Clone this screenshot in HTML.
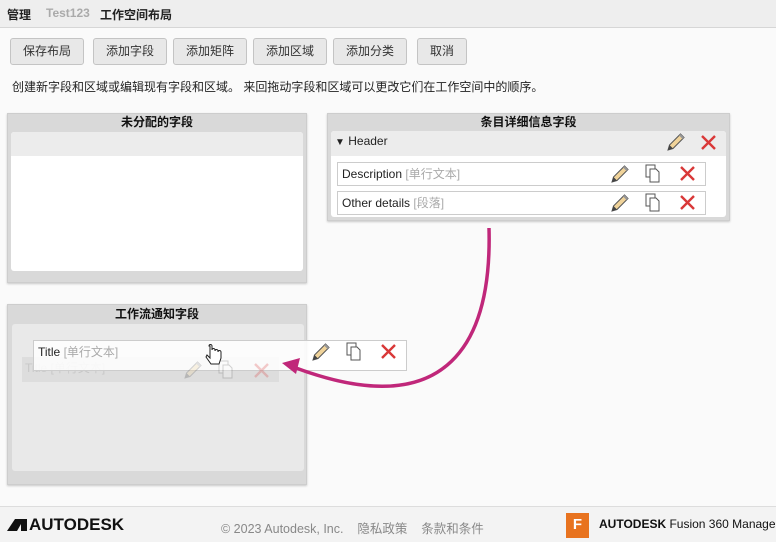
<!DOCTYPE html>
<html><head><meta charset="utf-8"><style>
*{margin:0;padding:0;box-sizing:border-box}
body{width:776px;height:542px;background:#fafafa;font-family:"Liberation Sans","Noto Sans CJK SC",sans-serif;font-size:12px;color:#222;position:relative;overflow:hidden}
.a{position:absolute}
.top{left:0;top:0;width:776px;height:28px;background:#eee;border-bottom:1px solid #d6d6d6}
.btn{top:38px;height:27px;background:#e8e8e8;border:1px solid #c4c4c4;border-radius:3px;font-size:12px;line-height:25px;text-align:center;color:#333}
.panel{background:#d9d9d9;border:1px solid #cdcdcd;box-shadow:0 1px 2px rgba(0,0,0,.2)}
.ptitle{left:0;right:0;top:0;height:18px;text-align:center;font-weight:bold;font-size:12px;line-height:16px;color:#111}
.field{height:24px;background:#fff;border:1px solid #ccc;font-size:12px;line-height:22px;padding-left:4px;color:#222}
.g{color:#aaa}
svg.ic{position:absolute}
</style></head><body>
<div class="a top"></div>
<div class="a" style="left:7px;top:6px;font-weight:bold;font-size:12px">管理</div>
<div class="a" style="left:46px;top:6px;font-weight:bold;color:#aaa">Test123</div>
<div class="a" style="left:100px;top:6px;font-weight:bold">工作空间布局</div>

<div class="a btn" style="left:10px;width:74px">保存布局</div>
<div class="a btn" style="left:93px;width:74px">添加字段</div>
<div class="a btn" style="left:173px;width:74px">添加矩阵</div>
<div class="a btn" style="left:253px;width:74px">添加区域</div>
<div class="a btn" style="left:333px;width:74px">添加分类</div>
<div class="a btn" style="left:417px;width:50px">取消</div>
<div class="a" style="left:12px;top:78px;font-size:12px;color:#222">创建新字段和区域或编辑现有字段和区域。 来回拖动字段和区域可以更改它们在工作空间中的顺序。</div>

<div class="a panel" style="left:7px;top:113px;width:300px;height:170px">
  <div class="a ptitle">未分配的字段</div>
  <div class="a" style="left:3px;top:18px;width:292px;height:139px;background:#fff;border-radius:3px;overflow:hidden"><div style="height:24px;background:#ececec"></div></div>
</div>

<div class="a panel" style="left:327px;top:113px;width:403px;height:108px">
  <div class="a ptitle">条目详细信息字段</div>
  <div class="a" style="left:3px;top:17px;width:395px;height:86px;background:#fff;border-radius:3px;overflow:hidden"><div style="height:25px;background:#ececec"></div></div>
  <div class="a" style="left:7px;top:20px;font-size:12px"><span style="font-size:10px">▼</span> Header</div>
</div>
<div class="a field" style="left:337px;top:162px;width:369px">Description <span class="g">[单行文本]</span></div>
<div class="a field" style="left:337px;top:191px;width:369px">Other details <span class="g">[段落]</span></div>

<div class="a panel" style="left:7px;top:304px;width:300px;height:181px">
  <div class="a ptitle" style="top:1px">工作流通知字段</div>
  <div class="a" style="left:4px;top:19px;width:292px;height:147px;background:#e9e9e9;border-radius:3px"></div>
</div>
<div class="a" style="left:22px;top:357px;width:257px;height:25px;background:#ddd;color:#c8c8c8;font-size:12px;line-height:22px;padding-left:3px">Title [单行文本]</div>
<div class="a field" style="left:33px;top:340px;width:374px;height:31px;background:rgba(255,255,255,.85);line-height:22px">Title <span class="g">[单行文本]</span></div>

<svg width="776" height="542" class="ic" style="left:0;top:0" viewBox="0 0 776 542">
<defs>
<g id="pen"><path d="M1 17 L2.5 12 L13.5 1 L17 4.5 L6 15.5 Z" fill="#f0d39a" stroke="#555" stroke-width="1"/><path d="M13.5 1 L17 4.5 L15.5 6 L12 2.5Z" fill="#999"/><path d="M1 17 L2.5 12 L6 15.5Z" fill="#444"/></g>
<g id="cp"><rect x="1" y="1" width="9" height="12" fill="#fff" stroke="#555"/><path d="M5 5 H11 L14 8 V18 H5 Z" fill="#fff" stroke="#555"/></g>
<g id="x"><path d="M2 2 L15 15 M15 2 L2 15" stroke="#d93838" stroke-width="2.4"/></g>
</defs>
<use href="#pen" x="667" y="133"/><use href="#x" x="700" y="134"/>
<use href="#pen" x="611" y="165"/><use href="#cp" x="645" y="164"/><use href="#x" x="679" y="165"/>
<use href="#pen" x="611" y="194"/><use href="#cp" x="645" y="193"/><use href="#x" x="679" y="194"/>
<use href="#pen" x="312" y="343"/><use href="#cp" x="346" y="342"/><use href="#x" x="380" y="343"/>
<g opacity=".25"><use href="#pen" x="184" y="361"/><use href="#cp" x="218" y="360"/><use href="#x" x="253" y="362"/></g>
<path d="M489 228 C492 340 450 425 296 368" fill="none" stroke="#c0277a" stroke-width="3.5"/>
<path d="M282 363 L300 358 L296 374 Z" fill="#c0277a"/>
<path d="M210 346 v12 l-3-3 l-1 2 l5 7 h8 l2-6 v-6 a1.5 1.5 0 0 0-3 0 v-1 a1.5 1.5 0 0 0-3 0 v-1 a1.5 1.5 0 0 0-3 0 v-4 a1.5 1.5 0 0 0-3 0z" fill="#fff" stroke="#222" stroke-width="1"/>
</svg>

<div class="a" style="left:0;top:506px;width:776px;height:36px;background:#f3f3f3;border-top:1px solid #ddd"></div>
<svg class="ic" style="left:7px;top:519px" width="20" height="12"><path d="M0 12 L8 0 H20 V12 H14 L14 5 L10 12Z" fill="#111"/></svg>
<div class="a" style="left:29px;top:515px;font-weight:bold;font-size:17px;color:#111">AUTODESK</div>
<div class="a" style="left:221px;top:518px;color:#888;font-size:12.5px">© 2023 Autodesk, Inc.&nbsp;&nbsp;&nbsp; 隐私政策&nbsp;&nbsp;&nbsp; 条款和条件</div>
<div class="a" style="left:566px;top:513px;width:23px;height:25px;background:#e8731f;color:#fff;font-weight:bold;font-size:15px;text-align:center;line-height:24px">F</div>
<div class="a" style="left:599px;top:517px;font-size:12px;color:#111"><b>AUTODESK</b> Fusion 360 Manage</div>
</body></html>
